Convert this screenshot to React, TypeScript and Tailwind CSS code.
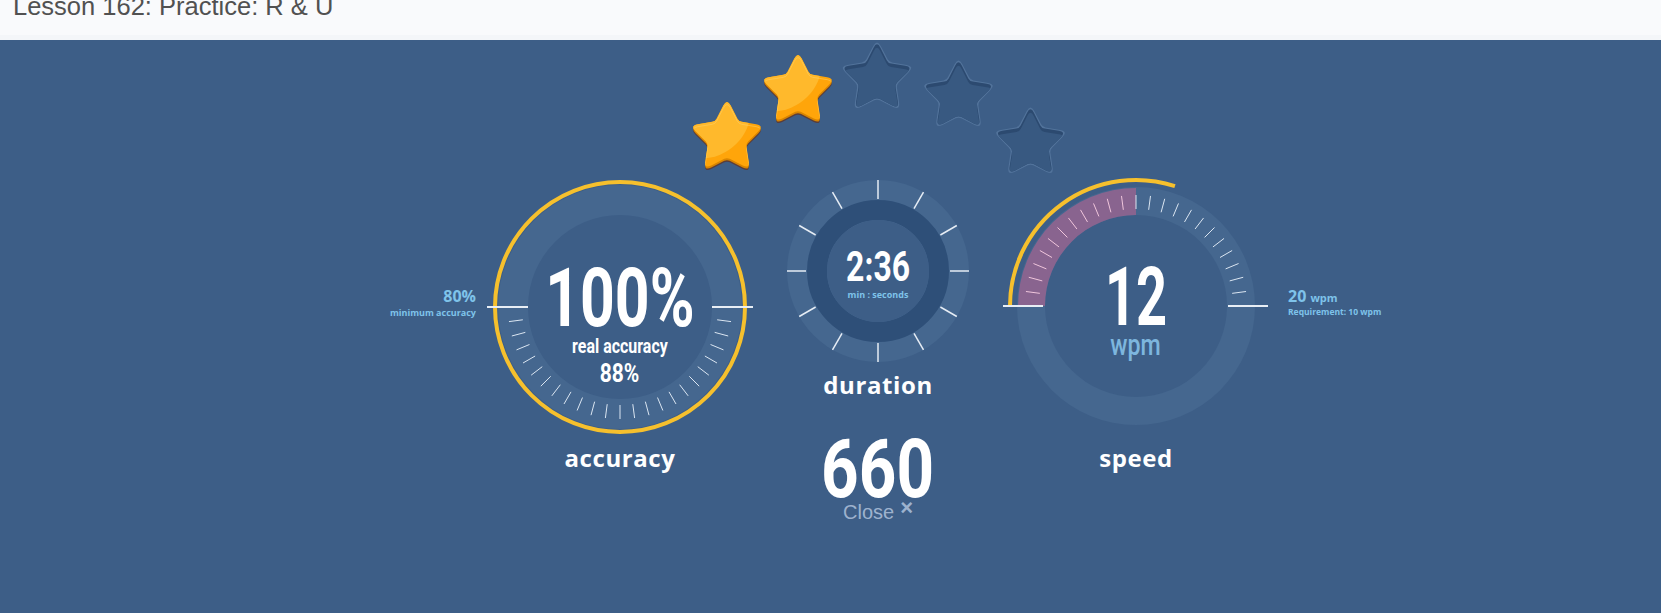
import React from 'react';

const BG = '#3d5e87';
const RING = '#45678f';

const polar = (cx: number, cy: number, r: number, deg: number): [number, number] => {
  const a = (deg * Math.PI) / 180;
  return [cx + r * Math.cos(a), cy + r * Math.sin(a)];
};

// rounded five point star, corners cut and joined with quadratic curves
const starPath = (cx: number, cy: number, R: number, r: number, ro: number, ri: number) => {
  const pts: [number, number][] = [];
  for (let i = 0; i < 10; i++) {
    const rad = i % 2 === 0 ? R : r;
    pts.push(polar(cx, cy, rad, -90 + i * 36));
  }
  let d = '';
  pts.forEach((p, i) => {
    const prev = pts[(i + 9) % 10];
    const next = pts[(i + 1) % 10];
    const cut = i % 2 === 0 ? ro : ri;
    const l1 = Math.hypot(prev[0] - p[0], prev[1] - p[1]);
    const l2 = Math.hypot(next[0] - p[0], next[1] - p[1]);
    const a = [p[0] + ((prev[0] - p[0]) * cut) / l1, p[1] + ((prev[1] - p[1]) * cut) / l1];
    const b = [p[0] + ((next[0] - p[0]) * cut) / l2, p[1] + ((next[1] - p[1]) * cut) / l2];
    d += `${i === 0 ? 'M' : 'L'}${a[0].toFixed(2)} ${a[1].toFixed(2)} Q${p[0].toFixed(2)} ${p[1].toFixed(2)} ${b[0].toFixed(2)} ${b[1].toFixed(2)} `;
  });
  return d + 'Z';
};

const GoldStar = ({ x, y, id }: { x: number; y: number; id: string }) => {
  const main = starPath(x, y - 1, 39, 20, 8, 3);
  return (
    <g>
      <defs>
        <clipPath id={id}>
          <path d={main} />
        </clipPath>
      </defs>
      <path d={starPath(x, y + 2.5, 39, 20, 8, 3)} fill="#5a3d3a" />
      <path d={starPath(x, y + 1, 39, 20, 8, 3)} fill="#d98500" />
      <path d={main} fill="#ffa50a" />
      <g clipPath={`url(#${id})`}>
        <circle cx={x - 26} cy={y - 30} r={50} fill="#ffb92c" />
        <path d={starPath(x, y + 1.5, 39, 20, 8, 3)} fill="none" stroke="#ffd46a" strokeWidth={1} opacity={0.5} />
      </g>
    </g>
  );
};

const EmptyStar = ({ x, y, id }: { x: number; y: number; id: string }) => {
  const inner = starPath(x, y, 37.5, 19, 7.5, 3);
  return (
    <g>
      <defs>
        <clipPath id={id}>
          <path d={inner} />
        </clipPath>
      </defs>
      <path d={starPath(x, y, 39.5, 20.5, 8, 3)} fill="#52739b" />
      <path d={inner} fill="#2c4a70" />
      <g clipPath={`url(#${id})`}>
        <path d={starPath(x, y + 3.5, 37.5, 19, 7.5, 3)} fill="#385981" />
      </g>
    </g>
  );
};

const Stars = () => (
  <svg width={774} height={130} className="block overflow-visible">
    <GoldStar x={236} y={98.5} id="gs1" />
    <GoldStar x={307} y={51.5} id="gs2" />
    <EmptyStar x={386} y={38.5} id="es1" />
    <EmptyStar x={467.5} y={56.5} id="es2" />
    <EmptyStar x={539.5} y={103.5} id="es3" />
  </svg>
);

const num = "font-['Roboto','Liberation_Sans',sans-serif] font-bold leading-none";
const label = "font-['Open_Sans','Lato',sans-serif] font-bold text-[24px] tracking-[0.6px] leading-none text-white";
const side = "font-['Open_Sans','Lato',sans-serif] font-bold leading-none text-[#7fc3ea]";

const AccuracyGauge = () => {
  const cx = 129;
  const cy = 137;
  const ticks = Array.from({ length: 23 }, (_, i) => 7.5 * (i + 1));
  return (
    <div className="relative w-[258px] h-[274px]">
      <svg width={258} height={274} className="block overflow-visible">
        <circle cx={cx} cy={cy} r={122} fill={RING} />
        <circle cx={cx} cy={cy} r={92} fill={BG} />
        {ticks.map(t => {
          const [x1, y1] = polar(cx, cy, 98, t);
          const [x2, y2] = polar(cx, cy, 112, t);
          return <line key={t} x1={x1} y1={y1} x2={x2} y2={y2} stroke="#dbe6f2" strokeWidth={1} />;
        })}
        <circle cx={cx} cy={cy} r={125} fill="none" stroke="#f6c02d" strokeWidth={4} />
        <line x1={cx - 133} y1={cy} x2={cx - 92} y2={cy} stroke="#e8eef5" strokeWidth={2} />
        <line x1={cx + 92} y1={cy} x2={cx + 133} y2={cy} stroke="#e8eef5" strokeWidth={2} />
      </svg>
      <div className="absolute right-full mr-[15px] top-[118px] flex flex-col items-end gap-[4px]">
        <span className={`${side} text-[16px]`}>80%</span>
        <span className={`${side} text-[9px] whitespace-nowrap`}>minimum accuracy</span>
      </div>
      <div className="absolute inset-x-0 top-[87px] flex flex-col items-center text-white">
        <span className={`${num} text-[82px] scale-x-[0.74]`}>100%</span>
        <span className={`${num} text-[21px] scale-x-[0.76] mt-[-3px]`}>real accuracy</span>
        <span className={`${num} text-[25px] scale-x-[0.84] mt-[4px]`}>88%</span>
      </div>
    </div>
  );
};

const DurationGauge = () => {
  const c = 100;
  const ticks = Array.from({ length: 12 }, (_, i) => i * 30);
  return (
    <div className="relative w-[200px] h-[200px]">
      <svg width={200} height={200} className="block overflow-visible">
        <circle cx={c} cy={101} r={91} fill={RING} />
        <circle cx={c} cy={101} r={61} fill="none" stroke="#2e4f78" strokeWidth={20} />
        <circle cx={c} cy={101} r={51} fill={BG} />
        {ticks.map(t => {
          const [x1, y1] = polar(c, 101, 72, t);
          const [x2, y2] = polar(c, 101, 91, t);
          return <line key={t} x1={x1} y1={y1} x2={x2} y2={y2} stroke="#e6edf5" strokeWidth={1.5} />;
        })}
      </svg>
      <div className="absolute inset-x-0 top-[76px] flex flex-col items-center text-white">
        <span className={`${num} text-[42px] scale-x-[0.76]`}>2:36</span>
        <span className={`${side} text-[9px] mt-[2px]`}>min : seconds</span>
      </div>
    </div>
  );
};

const SpeedGauge = () => {
  const cx = 129;
  const cy = 136;
  const ticks = Array.from({ length: 23 }, (_, i) => 180 + 7.5 * (i + 1));
  const [ox1, oy1] = polar(cx, cy, 118, 180);
  const [ox2, oy2] = polar(cx, cy, 118, 270);
  const [ix1, iy1] = polar(cx, cy, 91, 270);
  const [ix2, iy2] = polar(cx, cy, 91, 180);
  const [ax1, ay1] = polar(cx, cy, 126, 180);
  const [ax2, ay2] = polar(cx, cy, 126, 288);
  return (
    <div className="relative w-[258px] h-[274px]">
      <svg width={258} height={274} className="block overflow-visible">
        <circle cx={cx} cy={cy} r={119} fill={RING} />
        <circle cx={cx} cy={cy} r={91} fill={BG} />
        <path
          d={`M${ox1} ${oy1} A118 118 0 0 1 ${ox2} ${oy2} L${ix1} ${iy1} A91 91 0 0 0 ${ix2} ${iy2} Z`}
          fill="#89648f"
        />
        {ticks.map(t => {
          const [x1, y1] = polar(cx, cy, 97, t);
          const [x2, y2] = polar(cx, cy, 111, t);
          return (
            <line key={t} x1={x1} y1={y1} x2={x2} y2={y2} stroke={t < 270 ? '#f0c6dc' : '#dbe6f2'} strokeWidth={1} />
          );
        })}
        <path d={`M${ax1} ${ay1} A126 126 0 0 1 ${ax2} ${ay2}`} fill="none" stroke="#f6c02d" strokeWidth={4} />
        <line x1={cx - 133} y1={cy} x2={cx - 93} y2={cy} stroke="#e8eef5" strokeWidth={2} />
        <line x1={cx + 92} y1={cy} x2={cx + 132} y2={cy} stroke="#e8eef5" strokeWidth={2} />
      </svg>
      <div className="absolute left-full ml-[23px] top-[118px] flex flex-col items-start gap-[4px]">
        <span className={`${side} text-[16px] whitespace-nowrap`}>
          20 <span className="text-[11px]">wpm</span>
        </span>
        <span className={`${side} text-[8.5px] whitespace-nowrap`}>Requirement: 10 wpm</span>
      </div>
      <div className="absolute inset-x-0 top-[86px] flex flex-col items-center">
        <span className={`${num} text-[82px] scale-x-[0.66] text-white`}>12</span>
        <span className={`${num} font-medium text-[29px] scale-x-[0.8] text-[#7db6de] mt-[-7px]`}>wpm</span>
      </div>
    </div>
  );
};

export default function App() {
  return (
    <div className="w-[1661px] h-[613px] flex flex-col overflow-hidden">
      <header className="h-[40px] shrink-0 bg-[#f9fafc] border-b-[5px] border-[#f4f6f9] pl-[13px] overflow-hidden">
        <div className="mt-[-6px] font-['Liberation_Sans','Arial',sans-serif] text-[25.5px] leading-none text-[#515151]">
          Lesson 162: Practice: R &amp; U
        </div>
      </header>
      <main className="flex-1 bg-[#3d5e87]">
        <div className="ml-[491px] w-[774px] flex flex-col">
          <Stars />
          <div className="flex items-start">
            <div className="w-[258px] flex flex-col items-center">
              <AccuracyGauge />
              <span className={`${label} mt-[2px]`}>accuracy</span>
            </div>
            <div className="w-[258px] flex flex-col items-center">
              <DurationGauge />
              <span className={`${label} mt-[3px]`}>duration</span>
              <span className={`${num} text-white text-[82px] scale-x-[0.8] mt-[31px]`}>660</span>
              <button className="flex items-center gap-[6px] mt-[-8px] font-['Liberation_Sans','Arial',sans-serif] text-[20px] leading-none text-[#9db2ce]">
                Close
                <span className="text-[22px] font-bold mt-[-8px]">×</span>
              </button>
            </div>
            <div className="w-[258px] flex flex-col items-center">
              <SpeedGauge />
              <span className={`${label} mt-[2px]`}>speed</span>
            </div>
          </div>
        </div>
      </main>
    </div>
  );
}
